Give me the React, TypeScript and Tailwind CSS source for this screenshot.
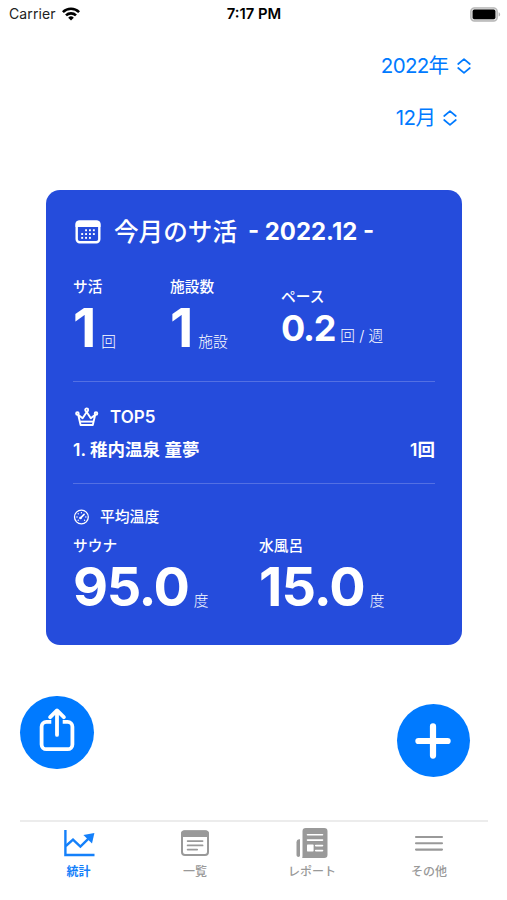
import type { ReactNode } from "react";

interface StatProps {
  label: string;
  value: string;
  unit: string;
  className?: string;
  rowClassName?: string;
  valueClassName?: string;
}

function Stat({
  label,
  value,
  unit,
  className = "",
  rowClassName = "mt-[10px]",
  valueClassName = "text-[54px]",
}: StatProps) {
  return (
    <div className={`whitespace-nowrap ${className}`}>
      <p className="text-[14.7px] font-medium leading-5">{label}</p>
      <div className={`flex h-[42px] items-baseline gap-[5px] leading-[42px] ${rowClassName}`}>
        <span className={`font-bold ${valueClassName}`}>{value}</span>
        <span className="text-[14.7px] font-light">{unit}</span>
      </div>
    </div>
  );
}

function WifiIcon() {
  return (
    <svg viewBox="0 0 18 14" className="h-[14px] w-[18px]" fill="none" stroke="currentColor" strokeWidth="2.6">
      <path d="M0.9 5.1a11.5 11.5 0 0 1 16.2 0" />
      <path d="M4 8.4a7.1 7.1 0 0 1 10 0" />
      <path d="M9 13.6 6.2 10.7a4 4 0 0 1 5.6 0Z" fill="currentColor" stroke="none" />
    </svg>
  );
}

function BatteryIcon() {
  return (
    <svg viewBox="0 0 31 15" className="h-[15px] w-[31px]">
      <rect x="0.8" y="0.8" width="26.4" height="13.2" rx="3.6" fill="#ddd" stroke="#b5b5b5" strokeWidth="1.3" />
      <rect x="2.6" y="2.6" width="22.8" height="9.6" rx="1.8" fill="#000" />
      <path d="M28.6 5.2c2 .7 2 3.7 0 4.4z" fill="#b5b5b5" />
    </svg>
  );
}

function UpDownIcon() {
  return (
    <svg
      viewBox="0 0 14 16"
      className="h-4 w-[14px]"
      fill="none"
      stroke="currentColor"
      strokeWidth="1.7"
      strokeLinecap="round"
      strokeLinejoin="round"
    >
      <path d="M1.2 6 7 1.2 12.8 6M1.2 10 7 14.8 12.8 10" />
    </svg>
  );
}

function CalendarIcon() {
  const dots = [
    [11, 10.2], [14.9, 10.2], [18.8, 10.2],
    [7.1, 14], [11, 14], [14.9, 14], [18.8, 14],
    [7.1, 17.8], [11, 17.8], [14.9, 17.8],
  ];
  return (
    <svg viewBox="0 0 26 24" className="h-6 w-[26px]">
      <rect x="1.7" y="1.7" width="22.6" height="20.6" rx="3" fill="none" stroke="currentColor" strokeWidth="2.4" />
      <path d="M.5 7V4.2A3.6 3.6 0 0 1 4.1.5h17.8a3.6 3.6 0 0 1 3.6 3.7V7z" fill="currentColor" />
      {dots.map(([x, y]) => (
        <rect key={`${x}-${y}`} x={x - 0.9} y={y - 0.9} width="1.9" height="1.9" fill="currentColor" />
      ))}
    </svg>
  );
}

function CrownIcon() {
  return (
    <svg viewBox="0 0 24 20" className="h-5 w-6" fill="none" stroke="currentColor" strokeWidth="1.9" strokeLinejoin="round">
      <path d="M3.2 7.8 5.6 18h12.2l2.4-10.2-4.4 3.4-4.1-6.2-4.1 6.2z" />
      <path d="M5.2 14.6h13" />
      <circle cx="11.7" cy="2.9" r="1.5" />
      <circle cx="2.4" cy="6.6" r="1.3" />
      <circle cx="21" cy="6.6" r="1.3" />
    </svg>
  );
}

function GaugeIcon() {
  return (
    <svg viewBox="0 0 16 16" className="size-4" fill="none" stroke="currentColor" strokeWidth="1.3" strokeLinecap="round">
      <circle cx="8.4" cy="8" r="6.9" />
      <path d="m7.4 9.1 3.7-3.7" strokeWidth="1.6" />
      <circle cx="7.5" cy="9" r="1.3" fill="currentColor" stroke="none" />
      <path d="M8.4 3.6v.2M5.2 4.8l.1.1M3.9 8h.2M5.2 11.2l.1-.1M12.8 8h.1M11.5 11.1l.1.1" />
    </svg>
  );
}

function ShareIcon() {
  return (
    <svg
      viewBox="0 0 36 44"
      className="h-11 w-9"
      fill="none"
      stroke="currentColor"
      strokeWidth="3.8"
      strokeLinecap="round"
      strokeLinejoin="round"
    >
      <path
        d="M12.3 13.9H7.4a4.8 4.8 0 0 0-4.8 4.8v17.7a4.8 4.8 0 0 0 4.8 4.8h21.2a4.8 4.8 0 0 0 4.8-4.8V18.7a4.8 4.8 0 0 0-4.8-4.8h-4.9"
        strokeLinecap="butt"
      />
      <path d="M18 26.9V3M11.2 9.2 18 2.4l6.8 6.8" />
    </svg>
  );
}

function ChartIcon() {
  return (
    <svg viewBox="0 0 32 28" className="h-7 w-8" fill="none" stroke="currentColor" strokeWidth="2.4">
      <path d="M2.4 1v25H31.5" />
      <path d="M2.8 17 10 10.7l7.4 7L27 8.2" />
      <path d="M31.4 4 29 14.6 20.4 6z" fill="currentColor" stroke="none" />
    </svg>
  );
}

function ListIcon() {
  return (
    <svg viewBox="0 0 30 28" className="h-7 w-[30px]" fill="none" stroke="currentColor">
      <rect x="2" y="2.3" width="26" height="23.6" rx="3" strokeWidth="2" />
      <path d="M1 8V4.8a3.4 3.4 0 0 1 3.4-3.4h21.2A3.4 3.4 0 0 1 29 4.8V8z" fill="currentColor" stroke="none" />
      <path d="M7.6 12.1h15M7.6 16.4h15M7.6 20.6h9.6" strokeWidth="1.7" strokeLinecap="round" />
    </svg>
  );
}

function ReportIcon() {
  return (
    <svg viewBox="0 0 32 32" className="size-8">
      <path d="M4 12.2v16.4c0 .8-.7 1.4-1.6 1.4S.5 29.3.5 28V15.2A3.2 3.2 0 0 1 4 12.2z" fill="currentColor" />
      <path
        d="M6.5 4.3A3.3 3.3 0 0 1 9.8 1H28.2a3.3 3.3 0 0 1 3.3 3.3v23.4a3.3 3.3 0 0 1-3.3 3.3H6.2c.2-.8.3-1.6.3-2.6z"
        fill="currentColor"
      />
      <path
        d="M11.5 7.8h15M11.5 13.1h15M19.7 18.6h6.8M19.7 23.6h6.8"
        stroke="#fff"
        strokeWidth="1.6"
        strokeLinecap="round"
      />
      <rect x="11" y="17.6" width="6.6" height="6.8" rx=".6" fill="#fff" />
    </svg>
  );
}

function MenuIcon() {
  return (
    <svg viewBox="0 0 30 20" className="h-5 w-[30px]" stroke="currentColor" strokeWidth="2.1" strokeLinecap="round">
      <path d="M2 4h26M2 10.3h26M2 16.6h26" />
    </svg>
  );
}

const tabs: { label: string; icon: ReactNode; active?: boolean }[] = [
  { label: "統計", icon: <ChartIcon />, active: true },
  { label: "一覧", icon: <ListIcon /> },
  { label: "レポート", icon: <ReportIcon /> },
  { label: "その他", icon: <MenuIcon /> },
];

export default function App() {
  return (
    <div className="flex h-[900px] w-[507px] flex-col overflow-hidden bg-white font-['Inter','Noto_Sans_CJK_JP',sans-serif]">
      <header className="grid h-7 grid-cols-3 items-center pl-[9px] pr-[6px] text-black">
        <div className="flex items-center gap-[6px]">
          <span className="text-[14px] leading-7 tracking-[0.1px] text-[#222]">Carrier</span>
          <WifiIcon />
        </div>
        <span className="pr-[2px] text-center text-[14.8px] font-semibold leading-7">7:17 PM</span>
        <div className="flex justify-end">
          <BatteryIcon />
        </div>
      </header>

      <div className="flex flex-col items-end pt-6 text-[20.5px] leading-7 text-[#007aff]">
        <button type="button" className="mr-9 flex items-center gap-2">
          <span>
            <span className="tracking-[-0.7px]">2022</span>年
          </span>
          <UpDownIcon />
        </button>
        <button type="button" className="mr-[50px] mt-6 flex items-center gap-[7px]">
          <span>
            <span className="tracking-[-0.5px]">12</span>月
          </span>
          <UpDownIcon />
        </button>
      </div>

      <section className="ml-[46px] mt-[58px] h-[455px] w-[416px] shrink-0 rounded-[14px] bg-[#254cdc] px-[27px] pt-6 text-white">
        <div className="flex h-9 items-center whitespace-nowrap pl-[2px]">
          <CalendarIcon />
          <h1 className="ml-[13px] text-[24.6px] font-medium leading-9">今月のサ活</h1>
          <span className="ml-[11px] text-[23.9px] font-bold leading-9">- 2022.12 -</span>
        </div>

        <div className="mt-[27px] flex h-[105px] border-b border-[#5370e3]">
          <Stat label="サ活" value="1" unit="回" className="w-[97px]" />
          <Stat label="施設数" value="1" unit="施設" className="w-[111px]" />
          <Stat
            label="ペース"
            value="0.2"
            unit="回 / 週"
            className="pt-[10px]"
            rowClassName="mt-0"
            valueClassName="text-[36px] tracking-[-1.2px]"
          />
        </div>

        <div className="h-[102px] border-b border-[#5370e3] pt-[21px]">
          <div className="flex h-7 items-center pl-[2px]">
            <CrownIcon />
            <h2 className="ml-[11px] text-[17px] font-semibold leading-7">TOP5</h2>
          </div>
          <div className="mt-[5px] flex justify-between text-[17.5px] font-semibold leading-7">
            <span>1. 稚内温泉 童夢</span>
            <span>1回</span>
          </div>
        </div>

        <div className="pt-[19px]">
          <div className="flex h-7 items-center">
            <GaugeIcon />
            <h2 className="ml-[11px] text-[14.8px] font-medium leading-7">平均温度</h2>
          </div>
          <div className="mt-[5px] flex">
            <Stat
              label="サウナ"
              value="95.0"
              unit="度"
              className="w-[186px]"
              valueClassName="text-[54px] tracking-[-1.4px]"
            />
            <Stat label="水風呂" value="15.0" unit="度" valueClassName="text-[54px] tracking-[-0.9px]" />
          </div>
        </div>
      </section>

      <div className="mt-[51px] flex h-[82px] shrink-0 items-start justify-between pl-[20.4px] pr-[37px] text-white">
        <button type="button" className="flex size-[73.4px] justify-center rounded-full bg-[#007aff] pt-[12px]">
          <ShareIcon />
        </button>
        <button type="button" className="mt-2 flex size-[73.4px] items-center justify-center rounded-full bg-[#007aff]">
          <svg viewBox="0 0 36 36" className="size-9" stroke="currentColor" strokeWidth="6.2" strokeLinecap="round">
            <path d="M18 3.4v29.2M3.4 18h29.2" />
          </svg>
        </button>
      </div>

      <nav className="mx-[20px] mt-auto grid h-[80px] w-[468px] shrink-0 grid-cols-4 border-t-2 border-[#ececec]">
        {tabs.map((tab) => (
          <div
            key={tab.label}
            className={`flex flex-col items-center ${tab.active ? "text-[#1480fa]" : "pr-px text-[#999]"}`}
          >
            <div className="mt-[5px] flex h-8 items-center">{tab.icon}</div>
            <span className={`mt-[3px] text-[12px] leading-5 ${tab.active ? "font-bold" : "font-medium"}`}>
              {tab.label}
            </span>
          </div>
        ))}
      </nav>
    </div>
  );
}
